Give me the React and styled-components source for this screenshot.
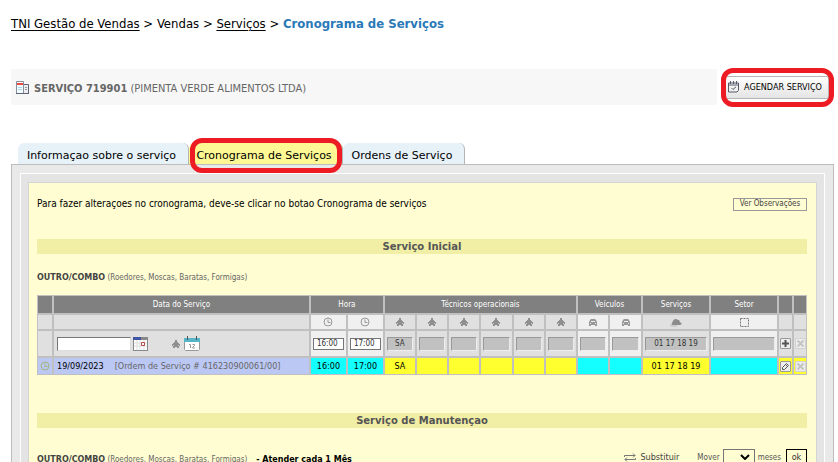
import React from 'react';
import styled, { createGlobalStyle, css } from 'styled-components';

const GlobalStyle = createGlobalStyle`
  body { margin: 0; background: #fff; color: #000; }
  *, *::before, *::after { box-sizing: border-box; }
  body, button, input, select, table {
    font-family: 'DejaVu Sans Condensed', 'DejaVu Sans', Verdana, sans-serif;
  }
`;

const wide = "'DejaVu Sans', Verdana, sans-serif";

const Page = styled.main`
  height: 100vh;
  overflow: hidden;
  padding: 16px 4px 0 11px;
`;

const Breadcrumb = styled.nav`
  font-size: 13px;
  line-height: 16px;
  white-space: pre;
  a { color: #000; text-underline-offset: 2px; }
  strong { color: #2a7ab8; }
`;

const TitleRow = styled.header`
  display: flex;
  align-items: center;
  gap: 4px;
  margin-top: 37px;
  padding-right: 5px;
`;

const TitleBar = styled.h1`
  flex: 1;
  display: flex;
  align-items: center;
  gap: 4px;
  height: 36px;
  margin: 0;
  padding: 2px 4px 0;
  background: #f7f7f7;
  color: #666;
  font-size: 11px;
  font-weight: normal;
  white-space: nowrap;
`;

const highlight = css`
  position: relative;
  &::after {
    content: '';
    position: absolute;
    border: 5px solid #ed1c24;
    border-radius: 12px;
    pointer-events: none;
  }
`;

const ScheduleButton = styled.button`
  ${highlight}
  display: flex;
  align-items: center;
  gap: 5px;
  width: 108px;
  height: 23px;
  padding: 0 0 0 6px;
  border: 1px solid #b5b5b5;
  border-radius: 2px;
  background: linear-gradient(#fff, #e4e4e4);
  font-size: 9px;
  white-space: nowrap;
  &::after { inset: -9px -6px -9px -1px; }
`;

const Tabs = styled.div`
  display: flex;
  margin-top: 38px;
  padding-left: 7px;
`;

const Tab = styled.button`
  height: 21px;
  width: ${(p) => p.$width}px;
  padding: 4px 3px 0 0;
  border: 0;
  border-right: 1px solid #b4b4b4;
  border-radius: 6px 6px 0 0;
  background: ${(p) => (p.$active ? '#fdf894' : '#e6f1f8')};
  font: 11px/16px ${wide};
  white-space: nowrap;
  ${(p) => p.$active && css`
    ${highlight}
    &::after { inset: -5px 0 -9px 1px; }
  `}
`;

const Frame = styled.section`
  padding: 8px;
  border: 1px solid #bdbdbd;
  background: #e9e9e9;
`;

const InnerFrame = styled.div`
  padding: 8px 7px 7px;
  border: 1px solid #fff;
  background: #e4e4e4;
`;

const Sheet = styled.div`
  min-height: 320px;
  padding: 14px 9px 20px 8px;
  border: 1px solid #d4d4d4;
  background: #fffdd1;
`;

const Intro = styled.div`
  display: flex;
  justify-content: space-between;
  align-items: center;
  font-size: 10px;
  line-height: 14px;
`;

const NotesButton = styled.button`
  width: 74px;
  height: 13px;
  padding: 0;
  border: 1px solid #999;
  background: #fffdd1;
  color: #444;
  font-size: 8px;
  line-height: 10px;
  white-space: nowrap;
`;

const Band = styled.h2`
  height: 15px;
  margin: ${(p) => p.$top}px 0 0;
  background: #f1eea6;
  color: #555;
  font: bold 10px/16px ${wide};
  text-align: center;
`;

const ComboLine = styled.div`
  display: flex;
  align-items: center;
  height: 14px;
  margin-top: ${(p) => p.$top}px;
  color: #666;
  font-size: 8px;
  white-space: pre;
  strong { color: #444; font: bold 8px ${wide}; }
`;

const Every = styled.b`
  margin-left: 9px;
  color: #000;
  font: bold 8px ${wide};
`;

const Actions = styled.div`
  display: flex;
  align-items: center;
  margin: -4px 0 0 auto;
  color: #555;
  font-size: 8px;
`;

const ReplaceLink = styled.a`
  margin: 0 18px 0 4px;
  border-bottom: 1px solid #000;
  color: #444;
  font-size: 9px;
  line-height: 10px;
  text-decoration: none;
`;

const MonthSelect = styled.select`
  appearance: none;
  width: 32px;
  height: 16px;
  margin: 0 3px;
  border: 1px solid #767676;
  border-radius: 0;
  background: transparent;
`;

const SelectBox = styled.span`
  position: relative;
  display: flex;
  svg { position: absolute; right: 8px; top: 5px; pointer-events: none; }
`;

const OkButton = styled.button`
  width: 21px;
  height: 16px;
  margin-left: 5px;
  padding: 0;
  border: 1px solid #000;
  background: transparent;
  color: #333;
  font-size: 9px;
`;

const Grid = styled.table`
  width: 100%;
  margin-top: 11px;
  table-layout: fixed;
  border-collapse: separate;
  border-spacing: 0;
  font-size: 9px;
  th, td { padding: 0; border: 1px solid #c0c0c0; text-align: center; white-space: nowrap; }
  svg { display: block; margin: 0 auto; }
`;

const Col = styled.col`
  width: ${(p) => p.$width};
`;

const Row = styled.tr`
  height: ${(p) => p.$height}px;
`;

const Head = styled.th`
  background: #808080;
  color: #fff;
  font-size: 8px;
  font-weight: normal;
`;

const tones = {
  grey: '#e0e0e0', light: '#f0f0f0', blue: '#bcc8f4', cyan: '#14ffff', yellow: '#ffff30',
};

const Cell = styled.td`
  background: ${(p) => tones[p.$tone]};
`;

const DateCell = styled.div`
  display: flex;
  align-items: center;
  padding-left: 3px;
  white-space: pre;
  color: #666;
  && svg { margin: 0 2px; }
  time { color: #000; margin-right: 11px; }
`;

const Gap = styled.span`
  width: 20px;
`;

const DateInput = styled.input`
  width: 74px;
  height: 14px;
  border: 1px solid #ddd;
  border-top-color: #777;
  border-left-color: #777;
  background: #fff;
`;

const HourInput = styled.input`
  display: block;
  width: 31px;
  height: 12px;
  margin: 0 auto;
  padding: 0 3px;
  border: 1px solid #767676;
  background: #fff;
  color: #333;
  font-size: 8px;
`;

const LockedInput = styled.input`
  display: block;
  width: calc(100% - 4px);
  height: 14px;
  margin: 0 auto;
  padding: 0;
  border: 1px solid #999;
  border-right-color: #eee;
  border-bottom-color: #eee;
  background: #c1c1c1;
  color: #333;
  font-size: 8px;
  text-align: center;
`;

const IconButton = styled.button`
  display: block;
  width: 11px;
  height: 11px;
  margin: 0 auto;
  padding: 0;
  border: 1px solid ${(p) => (p.disabled ? '#d2d2d2' : '#999')};
  border-radius: 1px;
  background: #ededed;
`;

const DocumentIcon = () => (
  <svg width="15" height="14" viewBox="0 0 15 14">
    <path d="M8 3.500h5.500v9H8" fill="#eeeef2" stroke="#596574" />
    <path d="M10 6.500h2M10 8.500h2" stroke="#999" />
    <path d="M1.500 .5h7v12h-7z" fill="#f4fbff" stroke="#8490a0" />
    <path d="M2 2h6v2H2z" fill="#ef4a40" />
    <path d="M3 6.500h4M3 8.500h4" stroke="#a9d9ee" />
    <path d="M1 12.500h13" stroke="#596574" />
  </svg>
);

const CheckCalendarIcon = () => (
  <svg width="11" height="12" viewBox="0 0 11 12" fill="none" stroke="#555b66">
    <path d="M.5 2h10v7.500l-1.500 1.500H.5z" />
    <path d="M1 4h9" />
    <path d="M2.500 0v3M5.500 0v3M8.500 0v3" />
    <path d="M3.500 7l1.500 1.500L8 5.800" />
  </svg>
);

const ClockIcon = ({ color = '#999' }) => (
  <svg width="10" height="10" viewBox="0 0 10 10" fill="none" stroke={color}>
    <circle cx="5" cy="5" r="4" />
    <path d="M5 2.500v3h2.500" />
  </svg>
);

const PersonIcon = () => (
  <svg width="8" height="8" viewBox="0 0 8 8" fill="#8f8f8f">
    <path d="M3 0h2v2H3zM2 2h4v1h1v1h1v2H7v2H5V7H3v1H1V6H0V4h1V3h1z" />
    <path d="M1 5h1v1H1zM6 5h1v1H6z" fill="#ccc" />
  </svg>
);

const CarIcon = () => (
  <svg width="10" height="9" viewBox="0 0 10 9">
    <path d="M1 4l1-2 1-1h4l1 1 1 2v4H7V7H3v1H1z" fill="#999" />
    <path d="M3 3h4v1H3zM2 5h1v1H2zM7 5h1v1H7z" fill="#eee" />
  </svg>
);

const MouseIcon = () => (
  <svg width="12" height="9" viewBox="0 0 12 9">
    <path d="M2 6c0-3 2-5 4-5 1 0 2 1 2 1h1l1 2 2 2-2 1H2z" fill="#8c8c8c" />
    <path d="M2 6c-2 0-2 2 0 2h5" fill="none" stroke="#bbb" />
  </svg>
);

const SectorIcon = () => (
  <svg width="9" height="9" viewBox="0 0 9 9">
    <path d="M.5 .5h8v8h-8z" fill="none" stroke="#777" strokeDasharray="2 1" />
  </svg>
);

const DatePickerIcon = () => (
  <svg width="15" height="14" viewBox="0 0 15 14">
    <path d="M0 0h15v14H0z" fill="#888" />
    <path d="M1 3h13v10H1z" fill="#fff" />
    <path d="M0 0h8v3H0z" fill="#4055a5" />
    <path d="M1 6h13M1 9h13M4 3v10M7 3v10M11 3v10" stroke="#ddd" />
    <path d="M8.500 5.500h3v3h-3z" fill="#fff" stroke="#b84848" />
  </svg>
);

const TearCalendarIcon = () => (
  <svg width="16" height="15" viewBox="0 0 16 15">
    <path d="M.5 2.500h15v11l-1 1h-13l-1-1z" fill="#fff" stroke="#999" />
    <path d="M0 2h16v4H0z" fill="#55b4c8" />
    <path d="M3.500 0v4M12.500 0v4" stroke="#555" />
    <path d="M5 8.500h1.500V12M8.500 8.500h2v1l-2 2v.5H11" fill="none" stroke="#999" />
  </svg>
);

const PlusIcon = () => (
  <svg width="9" height="9" viewBox="0 0 9 9"><path d="M4.500 1v7M1 4.500h7" stroke="#555" strokeWidth="2" /></svg>
);

const CrossIcon = () => (
  <svg width="9" height="9" viewBox="0 0 9 9"><path d="M1.500 1.500l6 6M7.500 1.500l-6 6" stroke="#c4c4c4" strokeWidth="2" /></svg>
);

const PencilIcon = () => (
  <svg width="9" height="9" viewBox="0 0 9 9" fill="none" stroke="#555"><path d="M1.500 7.500V5.500l4-4 2 2-4 4zM4.500 2.500l2 2" /></svg>
);

const SwapIcon = () => (
  <svg width="12" height="9" viewBox="0 0 12 9" fill="none" stroke="#777">
    <path d="M0.500 4V2.500H11M9 .5l2 2-2 2M11.500 5v1.500H1M3 4.500l-2 2 2 2" />
  </svg>
);

const ChevronIcon = () => (
  <svg width="10" height="6" viewBox="0 0 10 6" fill="none" stroke="#000" strokeWidth="2"><path d="M1 1l4 4 4-4" /></svg>
);

const columns = [16, null, 37, 37, 32, 32, 32, 33, 32, 32, 32, 33, 68, 68, 15, 14];
const technicians = ['SA', '', '', '', '', ''];
const vehicles = [1, 2];

const Combo = () => (
  <span><strong>OUTRO/COMBO</strong> (Roedores, Moscas, Baratas, Formigas)</span>
);

function ScheduleTable() {
  return (
    <Grid>
      <colgroup>
        {columns.map((w, i) => <Col key={i} $width={w ? `${w}px` : 'auto'} />)}
      </colgroup>
      <thead>
        <Row $height={19}>
          <Head />
          <Head>Data do Serviço</Head>
          <Head colSpan={2}>Hora</Head>
          <Head colSpan={6}>Técnicos operacionais</Head>
          <Head colSpan={2}>Veículos</Head>
          <Head>Serviços</Head>
          <Head>Setor</Head>
          <Head />
          <Head />
        </Row>
      </thead>
      <tbody>
        <Row $height={16}>
          <Cell $tone="grey" />
          <Cell $tone="grey" />
          <Cell $tone="light"><ClockIcon /></Cell>
          <Cell $tone="light"><ClockIcon /></Cell>
          {technicians.map((_, i) => <Cell key={i} $tone="grey"><PersonIcon /></Cell>)}
          {vehicles.map((v) => <Cell key={v} $tone="light"><CarIcon /></Cell>)}
          <Cell $tone="grey"><MouseIcon /></Cell>
          <Cell $tone="light"><SectorIcon /></Cell>
          <Cell $tone="grey" />
          <Cell $tone="grey" />
        </Row>
        <Row $height={27}>
          <Cell $tone="grey" />
          <Cell $tone="grey">
            <DateCell>
              <DateInput aria-label="Data do Serviço" />
              <DatePickerIcon /><Gap /><PersonIcon /><TearCalendarIcon />
            </DateCell>
          </Cell>
          <Cell $tone="light"><HourInput aria-label="Hora inicial" defaultValue="16:00" /></Cell>
          <Cell $tone="light"><HourInput aria-label="Hora final" defaultValue="17:00" /></Cell>
          {technicians.map((t, i) => (
            <Cell key={i} $tone="grey"><LockedInput aria-label={`Técnico ${i + 1}`} readOnly value={t} /></Cell>
          ))}
          {vehicles.map((v) => (
            <Cell key={v} $tone="light"><LockedInput aria-label={`Veículo ${v}`} readOnly value="" /></Cell>
          ))}
          <Cell $tone="grey"><LockedInput aria-label="Serviços" readOnly value="01 17 18 19" /></Cell>
          <Cell $tone="light"><LockedInput aria-label="Setor" readOnly value="" /></Cell>
          <Cell $tone="grey"><IconButton aria-label="Adicionar"><PlusIcon /></IconButton></Cell>
          <Cell $tone="grey"><IconButton disabled aria-label="Excluir"><CrossIcon /></IconButton></Cell>
        </Row>
        <Row $height={18}>
          <Cell $tone="blue"><ClockIcon color="#a3b57c" /></Cell>
          <Cell $tone="blue">
            <DateCell><time>19/09/2023</time>[Ordem de Serviço # 416230900061/00]</DateCell>
          </Cell>
          <Cell $tone="cyan">16:00</Cell>
          <Cell $tone="cyan">17:00</Cell>
          {technicians.map((t, i) => <Cell key={i} $tone="yellow">{t}</Cell>)}
          {vehicles.map((v) => <Cell key={v} $tone="cyan" />)}
          <Cell $tone="yellow">01 17 18 19</Cell>
          <Cell $tone="cyan" />
          <Cell $tone="yellow"><IconButton aria-label="Editar"><PencilIcon /></IconButton></Cell>
          <Cell $tone="yellow"><IconButton disabled aria-label="Excluir"><CrossIcon /></IconButton></Cell>
        </Row>
      </tbody>
    </Grid>
  );
}

export default function App() {
  return (
    <>
      <GlobalStyle />
      <Page>
        <Breadcrumb>
          <a href="#gestao">TNI Gestão de Vendas</a>{' > Vendas > '}
          <a href="#servicos">Serviços</a>{' > '}<strong>Cronograma de Serviços</strong>
        </Breadcrumb>
        <TitleRow>
          <TitleBar>
            <DocumentIcon />
            <span><b>SERVIÇO 719901</b> (PIMENTA VERDE ALIMENTOS LTDA)</span>
          </TitleBar>
          <ScheduleButton><CheckCalendarIcon />AGENDAR SERVIÇO</ScheduleButton>
        </TitleRow>
        <Tabs>
          <Tab $width={171}>Informaçao sobre o serviço</Tab>
          <Tab $width={154} $active>Cronograma de Serviços</Tab>
          <Tab $width={122}>Ordens de Serviço</Tab>
        </Tabs>
        <Frame>
          <InnerFrame>
            <Sheet>
              <Intro>
                <span>Para fazer alteraçoes no cronograma, deve-se clicar no botao Cronograma de serviços</span>
                <NotesButton>Ver Observações</NotesButton>
              </Intro>
              <Band $top={28}>Serviço Inicial</Band>
              <ComboLine $top={16}><Combo /></ComboLine>
              <ScheduleTable />
              <Band $top={38}>Serviço de Manutençao</Band>
              <ComboLine $top={24}>
                <Combo />
                <Every>- Atender cada 1 Mês</Every>
                <Actions>
                  <SwapIcon />
                  <ReplaceLink href="#substituir">Substituir</ReplaceLink>
                  <label htmlFor="months">Mover</label>
                  <SelectBox>
                    <MonthSelect id="months" defaultValue=""><option value="" /><option>1</option></MonthSelect>
                    <ChevronIcon />
                  </SelectBox>
                  meses
                  <OkButton>ok</OkButton>
                </Actions>
              </ComboLine>
            </Sheet>
          </InnerFrame>
        </Frame>
      </Page>
    </>
  );
}
